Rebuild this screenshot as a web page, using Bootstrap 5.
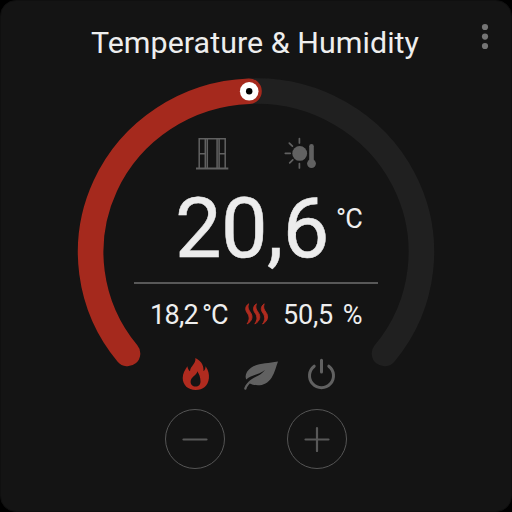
<!DOCTYPE html>
<html lang="en">
<head>
<meta charset="utf-8">
<meta name="viewport" content="width=device-width, initial-scale=1">
<title>Temperature &amp; Humidity</title>
<link href="https://cdn.jsdelivr.net/npm/bootstrap@5.3.0/dist/css/bootstrap.min.css" rel="stylesheet">
<style>
body{background:#000;font-family:Roboto,"Liberation Sans",sans-serif;color:#eee}
.thermo{width:512px;height:512px;background:#141414;border-radius:16px;border:1px solid #101010;color:#eee;display:grid;grid-template:100%/100%}
.thermo>*{grid-area:1/1;min-width:0}
.dial{width:510px;height:510px}
.title{font-size:30.4px;line-height:34px;height:34px;margin-top:25px;padding-right:2px;letter-spacing:.05px;font-weight:400}
.menu{margin:20px 19px 0 0;width:14px;height:32px;line-height:0;z-index:1}
.menu svg,.ic svg,.rnd svg{display:block}
.modes{height:34px;margin-top:77px;padding-left:195px;gap:52px}
.reading{height:86px;margin-top:15px;padding-left:174px}
.big{font-size:83px;line-height:85px;letter-spacing:-.6px;color:#ececec;-webkit-text-stroke:.5px #ececec}
.unit{font-size:27px;line-height:30px;margin:18px 0 0 7px;letter-spacing:-.6px}
.rule{width:244px;height:2px;background:#585858;margin:10px 0 0 133px}
.stats{height:36px;margin-top:13px;padding-left:149px;font-size:27px;line-height:36px;white-space:pre}
.stats span{display:block;flex:none}
.t1{width:52px;letter-spacing:-.7px}
.t2{width:25px;letter-spacing:-1.2px}
.t3{width:53px;letter-spacing:-.2px}
.acts{height:36px;margin-top:24px;padding-left:180px}
.steps{margin-top:16px;padding-left:164px;gap:62px}
.rnd{width:60px;height:60px;border:1px solid #555;background:none}
</style>
</head>
<body>
<main class="thermo overflow-hidden">
<svg class="dial" viewBox="1 1 510 510" fill="none" aria-hidden="true">
<path d="M384.5 353.5A165 161 0 0 0 249 91.2" stroke="#202020" stroke-width="25.6" stroke-linecap="round"/>
<path d="M127.5 353.5A165 161 0 0 1 249 91.2" stroke="#a5291d" stroke-width="25.6" stroke-linecap="round"/>
<circle cx="249.2" cy="91.3" r="9.3" fill="#fff"/><circle cx="249.2" cy="91.3" r="3.2" fill="#000"/>
</svg>
<section class="d-flex flex-column">
<h1 class="title text-center mb-0">Temperature &amp; Humidity</h1>
<div class="modes d-flex ic">
<svg width="34" height="34" viewBox="196 137 34 34" fill="none" stroke="#616161" stroke-width="1.5"><path d="M199.2 168V138.8H225.2V168M205.3 139V168M207.3 139V168M217.1 139V168M219.1 139V168M199.5 153.7H206M219 153.7H225"/><path d="M196 168.4H228.3" stroke-width="2"/></svg>
<svg width="36" height="34" viewBox="282 137 36 34" fill="#616161" stroke="#616161" stroke-linecap="round"><circle cx="299.7" cy="153.4" r="7.4" stroke="none"/><path d="M299.4 138.6V143M299.4 163.5V168M285.3 153.3H290.2M289.3 143.1L292.4 146.2M289.7 162.9L292.8 159.9" stroke-width="1.7" fill="none"/><path d="M311.5 146.2V162" stroke-width="4.6"/><circle cx="311.5" cy="163.6" r="4.4" stroke="none"/></svg>
</div>
<div class="reading d-flex align-items-start"><span class="big">20,6</span><span class="unit">°C</span></div>
<div class="rule"></div>
<div class="stats d-flex ic"><span class="t1">18,2</span><span class="t2">°C</span>
<svg class="flex-shrink-0" width="56" height="36" viewBox="227 297 56 36" fill="#b02b1f" stroke="#b02b1f" stroke-width=".9" stroke-linejoin="round"><g id="w"><path d="M248.6 303.8C244.7 306.8 245.2 310.2 247.4 313.2C249.8 316.6 249.7 320 247 324C252.4 321.1 253.3 316.2 250.3 312.2C248 309.1 247.4 307.1 248.6 303.8Z"/></g><use href="#w" x="7.8"/><use href="#w" x="15.6"/></svg><span class="t3">50,5</span><span class="t4"> %</span></div>
<div class="acts d-flex ic">
<svg width="164" height="36" viewBox="181 357 164 36" fill="#616161"><path fill="#b02b1f" fill-rule="evenodd" d="M195.4 358C202.6 361.5 203.7 367 203.5 371.2C205 370 205.6 368.1 205.6 366.3C208.4 370.2 209.3 374.3 208.9 378.2C208.2 385.5 203 390 195.7 390C188 390 182.7 385 182.7 378C182.7 373.4 185 370.2 187.4 366.3C187.8 368.8 188.6 370.3 190 371.3C190.2 365.8 196 364.5 195.4 358ZM197.2 371.2C197.3 375.2 190.6 376.6 190.6 381.8C190.6 384.8 192.7 386.6 195.5 386.6C198.7 386.6 200.5 384.5 200.5 381.2C200.5 377 198.9 373.7 197.2 371.2Z"/><path d="M278 361.5C267.5 363.6 258.5 362.6 251 367.8C246.7 370.9 244.5 375.3 246.2 379.5C251.4 374.7 258.7 374.8 265.1 369.9C260.5 376 252.9 377 248.5 381.7C246.4 384 244.4 386.4 244.1 389.1C245 390.4 246.4 389.7 246.5 388.7C247.1 386.6 248.4 385.1 249.8 383.4C257.8 387.2 266.5 385.4 271.6 377.7C275.1 372.4 276.1 366.2 278 361.5Z"/><path d="M314.2 366.2A12 12 0 1 0 328.8 366.2M321.5 360.2V372" fill="none" stroke="#616161" stroke-width="3" stroke-linecap="round"/></svg>
</div>
<div class="steps d-flex">
<button class="rnd btn rounded-circle p-0 d-flex align-items-center justify-content-center" aria-label="Decrease"><svg width="26" height="26" stroke="#585858" stroke-width="2.2" stroke-linecap="round"><path d="M1.5 13.5H24.5"/></svg></button>
<button class="rnd btn rounded-circle p-0 d-flex align-items-center justify-content-center" aria-label="Increase"><svg width="26" height="26" stroke="#585858" stroke-width="2.2" stroke-linecap="round"><path d="M1.5 13.5H24.5M13 2V25"/></svg></button>
</div>
</section>
<div class="menu ms-auto"><svg width="14" height="32" fill="#757575"><circle cx="7" cy="6" r="3.1"/><circle cx="7" cy="15.6" r="3.1"/><circle cx="7" cy="25" r="3.1"/></svg></div>
</main>
<script src="https://cdn.jsdelivr.net/npm/bootstrap@5.3.0/dist/js/bootstrap.bundle.min.js"></script>
</body>
</html>
